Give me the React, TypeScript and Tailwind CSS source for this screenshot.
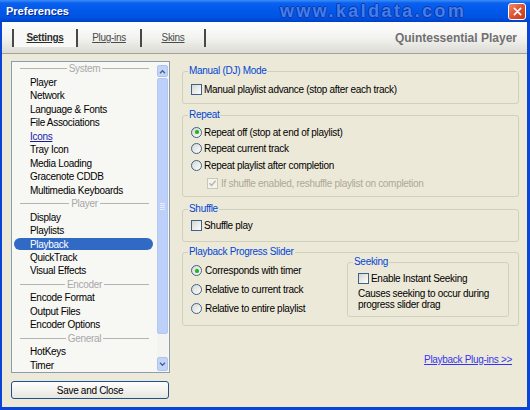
import React from 'react';

type Row = { label: string; kind?: 'head' | 'link' | 'sel' };

const rows: Row[] = [
  { label: 'System', kind: 'head' },
  { label: 'Player' },
  { label: 'Network' },
  { label: 'Language & Fonts' },
  { label: 'File Associations' },
  { label: 'Icons', kind: 'link' },
  { label: 'Tray Icon' },
  { label: 'Media Loading' },
  { label: 'Gracenote CDDB' },
  { label: 'Multimedia Keyboards' },
  { label: 'Player', kind: 'head' },
  { label: 'Display' },
  { label: 'Playlists' },
  { label: 'Playback', kind: 'sel' },
  { label: 'QuickTrack' },
  { label: 'Visual Effects' },
  { label: 'Encoder', kind: 'head' },
  { label: 'Encode Format' },
  { label: 'Output Files' },
  { label: 'Encoder Options' },
  { label: 'General', kind: 'head' },
  { label: 'HotKeys' },
  { label: 'Timer' },
];

function CheckBox({ checked = false, disabled = false }: { checked?: boolean; disabled?: boolean }) {
  return (
    <span
      className={`flex h-[11px] w-[11px] shrink-0 items-center justify-center border ${
        disabled ? 'border-[#C9C7BA] bg-[#F4F3EE]' : 'border-[#3E6289] bg-linear-to-br from-[#D6D6D0] to-white'
      }`}
    >
      {checked && (
        <svg viewBox="0 0 9 9" className="h-[9px] w-[9px]">
          <path d="M1.5 4.2 L3.6 6.4 L7.6 1.8" fill="none" stroke={disabled ? '#B9B7AA' : '#21A121'} strokeWidth="1.5" />
        </svg>
      )}
    </span>
  );
}

function Radio({ on = false }: { on?: boolean }) {
  return (
    <span className="flex h-[11px] w-[11px] shrink-0 items-center justify-center rounded-full border border-[#3E6289] bg-linear-to-br from-[#D6D6D0] to-white">
      {on && <span className="h-[4px] w-[4px] rounded-full bg-[#27B327] shadow-[0_0_1px_#5DD35D]" />}
    </span>
  );
}

function Group({ title, className = '', children }: { title: string; className?: string; children?: React.ReactNode }) {
  return (
    <div className={`relative rounded-[3px] border border-[#D0D0BF] ${className}`}>
      <span className="absolute left-[5px] top-[-7px] bg-[#ECE9D8] px-[1px] leading-[12px] text-[#0046D5]">{title}</span>
      {children}
    </div>
  );
}

function Chevron({ up }: { up?: boolean }) {
  return (
    <svg viewBox="0 0 8 6" className="h-[5px] w-[7px]">
      <path d={up ? 'M1 5 L4 2 L7 5' : 'M1 1 L4 4 L7 1'} fill="none" stroke="#4D6185" strokeWidth="1.6" />
    </svg>
  );
}

function TitleBar() {
  return (
    <div className="relative flex h-[22px] shrink-0 items-center bg-[linear-gradient(180deg,#3C8EF7_0%,#0A60EE_14%,#0058EA_50%,#0053E2_80%,#0040C4_100%)] pl-[6px] pr-[4px]">
      <span className="text-[11px] font-bold tracking-normal text-white [text-shadow:1px_1px_0_#0A2A8F]">Preferences</span>
      {/* watermark over the caption */}
      <span className="absolute left-[280px] top-[1px] text-[18px] font-bold leading-[20px] tracking-[2.4px] text-[#3F7FEF] [text-shadow:-1px_0_0_#1238A6,1px_0_0_#1238A6,0_-1px_0_#1238A6,0_1px_0_#1238A6]">
        www.kaldata.com
      </span>
      <button className="ml-auto flex h-[17px] w-[18px] items-center justify-center rounded-[3px] border border-white bg-linear-to-br from-[#EE8A68] via-[#DD5330] to-[#C13A1A]">
        <svg viewBox="0 0 10 10" className="h-[9px] w-[9px]">
          <path d="M1.5 1.5 L8.5 8.5 M8.5 1.5 L1.5 8.5" stroke="white" strokeWidth="1.8" strokeLinecap="round" />
        </svg>
      </button>
    </div>
  );
}

function TabStrip() {
  const tabs = ['Settings', 'Plug-ins', 'Skins'];
  return (
    <div className="flex h-[32px] shrink-0 items-center border-b border-[#A3A29A] bg-linear-to-b from-[#FEFEFE] via-[#F3F3F0] to-[#DCDBD5] pl-[10px] pr-[10px]">
      {tabs.map((t, i) => (
        <div
          key={t}
          className={`flex h-[18px] w-[64px] items-center justify-center border-l-2 border-[#484848] underline ${
            i === 0 ? 'bg-[#F8F8F6] font-bold text-[#2E2E2E]' : 'text-[#4A4A4A]'
          }`}
        >
          {t}
        </div>
      ))}
      <div className="h-[18px] border-l-2 border-[#484848]" />
      <span className="ml-auto text-[12px] font-bold tracking-normal text-[#707070]">Quintessential Player</span>
    </div>
  );
}

function SettingsList() {
  return (
    <div className="flex h-[312px] w-[159px] border border-[#8A9CB0] bg-[#F7F7F4]">
      <div className="flex flex-1 flex-col">
        {rows.map((r, i) =>
          r.kind === 'head' ? (
            <div key={i} className="flex h-[13.5px] items-center pl-[8px] pr-[8px] text-[#A8A8A8]">
              <span className="h-px flex-1 bg-[#B4B4B0]" />
              <span className="px-[2px]">{r.label}</span>
              <span className="h-px flex-1 bg-[#B4B4B0]" />
            </div>
          ) : r.kind === 'sel' ? (
            <div key={i} className="flex h-[13.5px] items-center pl-[2px]">
              <span className="flex h-[12px] w-[139px] items-center rounded-full bg-[#316AC5] pl-[16px] text-white">{r.label}</span>
            </div>
          ) : (
            <div
              key={i}
              className={`flex h-[13.5px] items-center pl-[18px] ${r.kind === 'link' ? 'text-[#1A1AA8] underline' : ''}`}
            >
              {r.label}
            </div>
          )
        )}
      </div>
      {/* vertical scroll bar */}
      <div className="mr-px flex w-[11px] flex-col pt-[3px]">
        <div className="flex h-[12px] items-center justify-center rounded-[2px] border border-[#B0C3EE] bg-[#C3D4FB]">
          <Chevron up />
        </div>
        <div className="mt-px flex h-[256px] flex-col items-center justify-center gap-[1px] rounded-[2px] border border-[#B3C7F3] bg-[#BDD0FA]">
          <span className="h-px w-[5px] bg-[#E8EEFD]" />
          <span className="h-px w-[5px] bg-[#E8EEFD]" />
          <span className="h-px w-[5px] bg-[#E8EEFD]" />
          <span className="h-px w-[5px] bg-[#E8EEFD]" />
        </div>
        <div className="flex-1 bg-[#F4F3EF]" />
        <div className="mb-px flex h-[14px] items-center justify-center rounded-[2px] border border-[#B0C3EE] bg-[#C3D4FB]">
          <Chevron />
        </div>
      </div>
    </div>
  );
}

export default function App() {
  return (
    <div className="flex h-[410px] w-[530px] flex-col overflow-hidden bg-[#ECE9D8] text-[10px] tracking-[-0.3px] text-black [font-family:'Liberation_Sans',Arial,sans-serif]">
      <TitleBar />
      <div className="flex flex-1 flex-col border-b-[3px] border-l-2 border-r-[3px] border-[#0A45D6]">
        <TabStrip />
        <div className="flex flex-1">
          {/* left: category list */}
          <div className="ml-[9px] flex w-[159px] flex-col pt-[7px]">
            <SettingsList />
            <button className="mt-[8px] flex h-[18px] w-[158px] items-center justify-center rounded-[3px] border border-[#1E4F8F] bg-linear-to-b from-white to-[#E6E5DF]">
              Save and Close
            </button>
          </div>

          {/* right: playback settings */}
          <div className="ml-[12px] flex w-[337px] flex-col pt-[17px]">
            <Group title="Manual (DJ) Mode" className="h-[33px] pl-[8px] pt-[10px]">
              <div className="flex h-[14px] items-center gap-[2px]">
                <CheckBox />
                <span>Manual playlist advance (stop after each track)</span>
              </div>
            </Group>

            <Group title="Repeat" className="mt-[11px] h-[82px] pl-[8px] pt-[8px]">
              <div className="flex h-[16px] items-center gap-[2px]">
                <Radio on />
                <span>Repeat off (stop at end of playlist)</span>
              </div>
              <div className="flex h-[17px] items-center gap-[2px]">
                <Radio />
                <span>Repeat current track</span>
              </div>
              <div className="flex h-[16px] items-center gap-[2px]">
                <Radio />
                <span>Repeat playlist after completion</span>
              </div>
              <div className="mt-[2px] flex h-[16px] items-center gap-[3px] pl-[16px] text-[#ACA899]">
                <CheckBox checked disabled />
                <span>If shuffle enabled, reshuffle playlist on completion</span>
              </div>
            </Group>

            <Group title="Shuffle" className="mt-[12px] h-[33px] pl-[8px] pt-[7px]">
              <div className="flex h-[16px] items-center gap-[2px]">
                <CheckBox />
                <span>Shuffle play</span>
              </div>
            </Group>

            <Group title="Playback Progress Slider" className="mt-[10px] flex h-[74px] items-start pl-[8px]">
              <div className="flex w-[156px] flex-col pt-[8px]">
                <div className="flex h-[19px] items-center gap-[3px]">
                  <Radio on />
                  <span>Corresponds with timer</span>
                </div>
                <div className="flex h-[19px] items-center gap-[3px]">
                  <Radio />
                  <span>Relative to current track</span>
                </div>
                <div className="flex h-[19px] items-center gap-[3px]">
                  <Radio />
                  <span>Relative to entire playlist</span>
                </div>
              </div>
              <Group title="Seeking" className="mt-[9px] h-[55px] w-[162px] pl-[10px] pt-[8px]">
                <div className="flex h-[14px] items-center gap-[2px]">
                  <CheckBox />
                  <span>Enable Instant Seeking</span>
                </div>
                <p className="mt-[3px] leading-[11px]">
                  Causes seeking to occur during
                  <br />
                  progress slider drag
                </p>
              </Group>
            </Group>

            <div className="mt-[28px] flex justify-end pr-[7px]">
              <a className="leading-[12px] text-[#3535F0] underline">Playback Plug-ins &gt;&gt;</a>
            </div>
          </div>
        </div>
      </div>
    </div>
  );
}
